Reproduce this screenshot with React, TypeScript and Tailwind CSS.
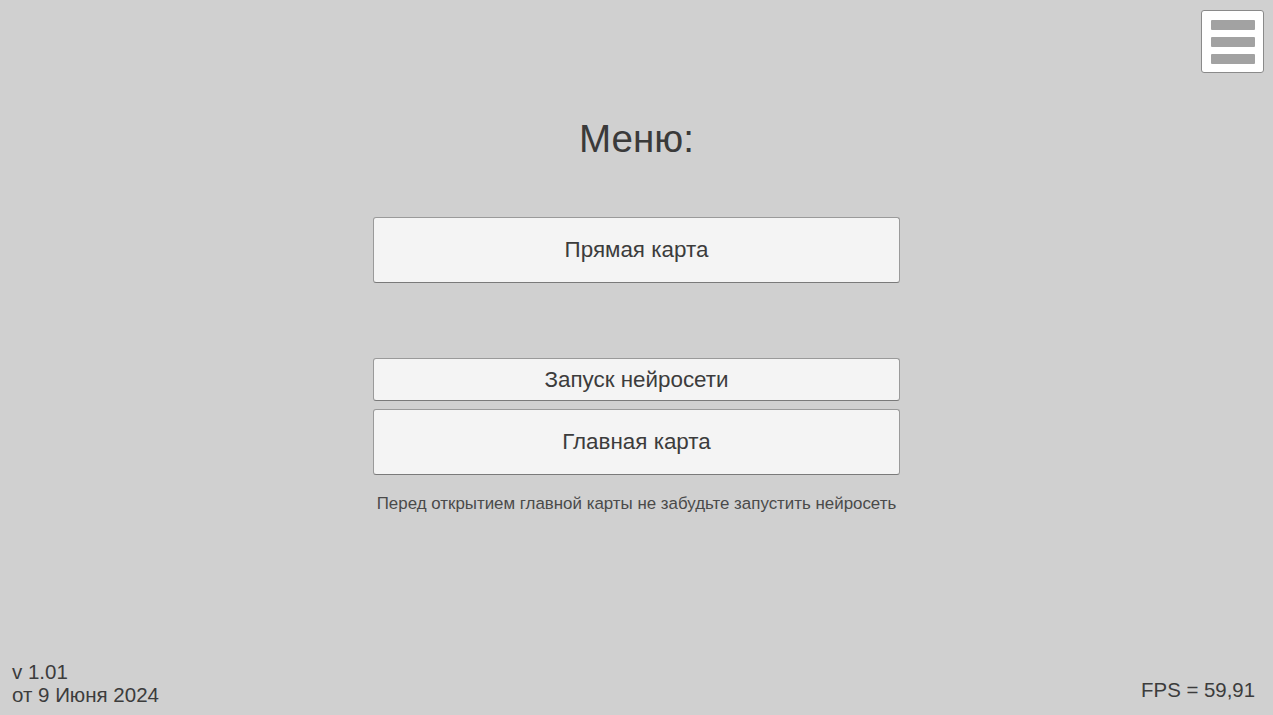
export default function App() {
  return (
    <div
      className="relative h-[715px] w-full overflow-hidden bg-[#d0d0d0] text-[#383838]"
      style={{ fontFamily: '"Liberation Sans", Arial, sans-serif' }}
    >
      {/* Menu toggle */}
      <button className="absolute right-[9px] top-[10px] flex h-[63px] w-[63px] flex-col items-center justify-center gap-[7px] rounded-[3px] border border-[#8a8a8a] bg-white">
        <span className="h-[10px] w-[44px] rounded-[1px] bg-[#a2a2a2]" />
        <span className="h-[10px] w-[44px] rounded-[1px] bg-[#a2a2a2]" />
        <span className="h-[10px] w-[44px] rounded-[1px] bg-[#a2a2a2]" />
      </button>

      {/* Main menu */}
      <div className="flex flex-col items-center pt-[117px]">
        <h1 className="text-[38.6px] leading-[44px] text-[#3a3a3a]">Меню:</h1>

        <button className="mt-[56px] h-[66px] w-[527px] rounded-[3px] border border-[#9a9a9a] border-b-[#7a7a7a] bg-[#f4f4f4] text-[22.4px] text-[#3c3c3c]">
          Прямая карта
        </button>

        <button className="mt-[75px] h-[43px] w-[527px] rounded-[3px] border border-[#9a9a9a] border-b-[#7a7a7a] bg-[#f4f4f4] text-[22.4px] text-[#3c3c3c]">
          Запуск нейросети
        </button>
        <button className="mt-[8px] h-[66px] w-[527px] rounded-[3px] border border-[#9a9a9a] border-b-[#7a7a7a] bg-[#f4f4f4] text-[22.4px] text-[#3c3c3c]">
          Главная карта
        </button>

        <p className="mt-[19px] text-[16.9px] leading-[20px] text-[#4a4a4a]">
          Перед открытием главной карты не забудьте запустить нейросеть
        </p>
      </div>

      {/* Version */}
      <div className="absolute bottom-[9px] left-[12px] text-[20.5px] leading-[23px] text-[#3c3c3c]">
        <p>v 1.01</p>
        <p>от 9 Июня 2024</p>
      </div>

      {/* FPS */}
      <div className="absolute bottom-[13px] right-[18px] text-[20.4px] leading-[23px] text-[#3c3c3c]">
        FPS = 59,91
      </div>
    </div>
  );
}
